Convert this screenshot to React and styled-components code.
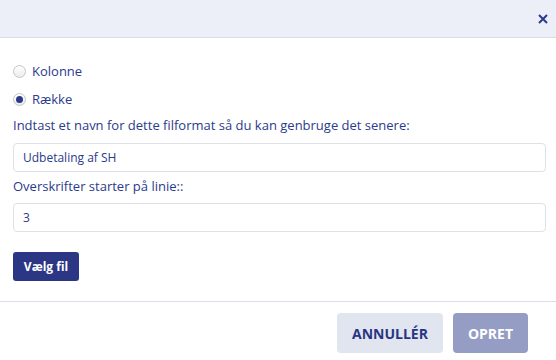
import styled, { createGlobalStyle } from "styled-components";

const Global = createGlobalStyle`
  html, body { margin: 0; padding: 0; background: #fff; }
  body { font-family: "Open Sans", "Liberation Sans", sans-serif; }
`;

const Dialog = styled.div`
  width: 556px;
  height: 360px;
  background: #fff;
  display: flex;
  flex-direction: column;
  color: #2b3a8c;
  font-size: 13px;
`;

const Header = styled.div`
  height: 38px;
  background: #eceff8;
  border-bottom: 1px solid #dcdde8;
  display: flex;
  align-items: center;
  justify-content: flex-end;
  padding-right: 8px;
  box-sizing: border-box;
`;

const Close = styled.button`
  border: 0;
  background: transparent;
  padding: 0;
  width: 10px;
  height: 10px;
  display: flex;
  cursor: pointer;
`;

const Body = styled.div`
  padding: 26px 10px 0 13px;
  display: flex;
  flex-direction: column;
  height: 264px;
  box-sizing: border-box;
  border-bottom: 1px solid #dcdde8;
`;

const RadioRow = styled.label`
  display: flex;
  align-items: center;
  gap: 6px;
  height: 14px;
  margin-bottom: ${({ last }) => (last ? "10px" : "14px")};
  line-height: 14px;
`;

const Radio = styled.span`
  width: 13px;
  height: 13px;
  box-sizing: border-box;
  border-radius: 50%;
  border: 1px solid #c6c6c6;
  background: linear-gradient(#fff, #ececec);
  display: flex;
  align-items: center;
  justify-content: center;
  &::after {
    content: "";
    width: 7px;
    height: 7px;
    border-radius: 50%;
    background: ${({ checked }) => (checked ? "#2b3a8c" : "transparent")};
  }
`;

const Label = styled.div`
  height: 18px;
  line-height: 18px;
  margin-bottom: ${({ gap }) => gap}px;
`;

const Input = styled.input`
  height: 29px;
  box-sizing: border-box;
  border: 1px solid #dfe1e8;
  border-radius: 4px;
  padding: 0 9px;
  font: inherit;
  font-size: 12px;
  color: #2b3a8c;
  outline: none;
  margin-bottom: ${({ gap }) => gap}px;
`;

const FileButton = styled.button`
  align-self: flex-start;
  height: 29px;
  width: 66px;
  border: 0;
  border-radius: 3px;
  background: #2b3684;
  color: #fff;
  font: inherit;
  font-weight: 700;
  font-size: 12px;
  padding: 0;
`;

const Footer = styled.div`
  display: flex;
  justify-content: flex-end;
  gap: 10px;
  padding: 11px 28px 0 0;
`;

const Action = styled.button`
  height: 40px;
  border: 0;
  border-radius: 4px;
  padding: 0;
  width: ${({ w }) => w}px;
  background: ${({ primary }) => (primary ? "#959dc4" : "#e1e5ef")};
  color: ${({ primary }) => (primary ? "#fff" : "#283583")};
  font: inherit;
  font-size: 14px;
  font-weight: 700;
`;

export default function App() {
  return (
    <Dialog>
      <Global />
      <Header>
        <Close aria-label="close">
          <svg width="10" height="10" viewBox="0 0 10 10">
            <path d="M1 1L9 9M9 1L1 9" stroke="#2b3a8c" strokeWidth="2" />
          </svg>
        </Close>
      </Header>
      <Body>
        <RadioRow>
          <Radio />
          Kolonne
        </RadioRow>
        <RadioRow last>
          <Radio checked />
          Række
        </RadioRow>
        <Label gap={9}>Indtast et navn for dette filformat så du kan genbruge det senere:</Label>
        <Input defaultValue="Udbetaling af SH" gap={5} />
        <Label gap={8}>Overskrifter starter på linie::</Label>
        <Input defaultValue="3" gap={20} />
        <FileButton>Vælg fil</FileButton>
      </Body>
      <Footer>
        <Action w={106}>ANNULLÉR</Action>
        <Action w={75} primary>OPRET</Action>
      </Footer>
    </Dialog>
  );
}
